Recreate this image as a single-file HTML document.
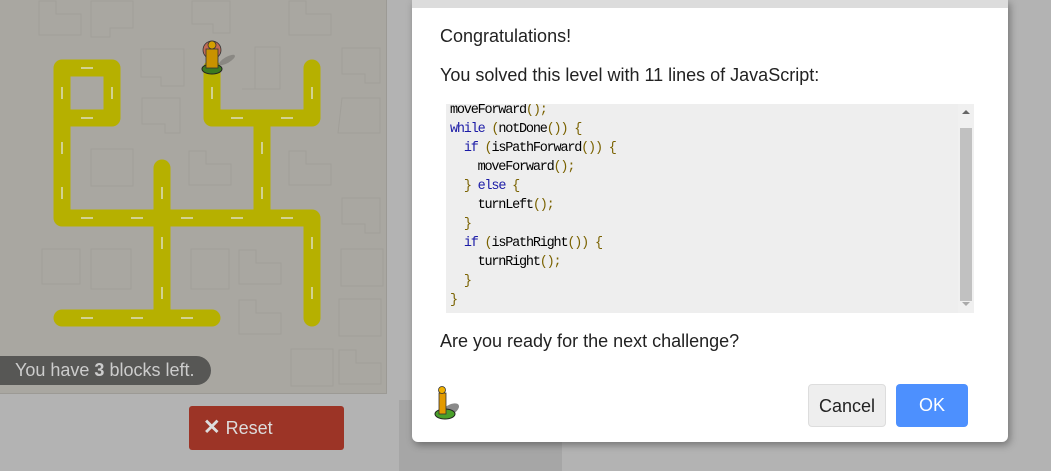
<!DOCTYPE html>
<html><head><style>
body{margin:0;width:1051px;height:471px;overflow:hidden;background:#b3b3b3;font-family:"Liberation Sans",sans-serif;position:relative}
#maze{position:absolute;left:0;top:0;width:386px;height:393px;background:#a9a7a1;border-right:1px solid #9c9a95;border-bottom:1px solid #9c9a95}
#stripe{position:absolute;left:399px;top:400px;width:163px;height:71px;background:#a6a6a6}
#tip{position:absolute;left:0;top:356px;width:211px;height:29px;background:#575755;border-radius:0 15px 15px 0;color:#ccc;font-size:18px;line-height:29px;padding-left:15px;box-sizing:border-box}
#reset{position:absolute;left:189px;top:406px;width:155px;height:44px;background:#9c3426;border-radius:3px;color:#ddd;font-size:18px;line-height:44px;padding-left:14px;box-sizing:border-box}
#dlg{position:absolute;left:412px;top:0;width:596px;height:442px;background:#fff;border-radius:0 0 6px 6px;box-shadow:2px 3px 8px rgba(0,0,0,.35)}
#band{position:absolute;left:0;top:0;width:100%;height:8px;background:#dcdcdc}
.t{position:absolute;left:28px;font-size:18px;color:#222}
#code{position:absolute;left:34px;top:104px;width:528px;height:209px;background:#eee;overflow:hidden}
#code pre{margin:0;position:absolute;left:4px;top:-3px;font-family:"Liberation Mono",monospace;font-size:13.5px;letter-spacing:-1.2px;line-height:19px;color:#000}
.k{color:#1a1aa6}.p{color:#7a6200}
#sb{position:absolute;right:0;top:0;width:16px;height:209px;background:#f0f0f0}
#thumb{position:absolute;right:2px;top:24px;width:12px;height:173px;background:#c1c1c1}
.btn{position:absolute;top:384px;height:43px;border-radius:4px;font-size:18px;line-height:43px;text-align:center;box-sizing:border-box}
</style></head><body>
<div id="maze">
<svg width="386" height="393" style="position:absolute;left:0;top:0">
<g fill="none" stroke="#a19f99" stroke-width="1">
<path d="M39 1h17v13h25v21H39z"/><path d="M91 1h42v27h-23v9H91z"/><path d="M192 1h38v32h-17v-9h-21z"/><path d="M289 1h17v13h25v21h-42z"/>
<path d="M141 49h43v37h-23v-9h-20z"/><path d="M242 89h13v-42h25v42z"/><path d="M342 48h38v35h-15v-9h-23z"/>
<path d="M142 98h38v35h-15v-9h-23z"/><path d="M342 98h38v35h-42z"/>
<path d="M91 149h42v37H91z"/><path d="M189 151h17v13h25v21h-42z"/><path d="M289 151h17v13h25v21h-42z"/>
<path d="M342 198h38v35h-15v-9h-23z"/><path d="M42 249h38v35h-38z"/><path d="M91 249h40v40H91z"/><path d="M191 249h38v40h-38z"/><path d="M239 250h17v13h25v21h-42z"/><path d="M341 249h42v37h-42z"/>
<path d="M339 299h42v37h-42z"/><path d="M239 300h17v13h25v21h-42z"/><path d="M291 349h42v37h-42z"/><path d="M339 350h17v13h25v21h-42z"/>
</g>
<g fill="none" stroke="#b6b000" stroke-width="17" stroke-linecap="round" stroke-linejoin="round">
<path d="M62 68H112V118H62V68"/><path d="M62 118V218H312V318"/><path d="M162 168V318"/><path d="M62 318H212"/>
<path d="M212 68V118H312V68"/><path d="M262 118V218"/>
</g>
<g stroke="#dcdcc0" stroke-width="1.5">
<path d="M81 68h12M81 118h12M81 218h12M131 218h12M181 218h12M231 218h12M281 218h12M81 318h12M131 318h12M181 318h12M231 118h12M281 118h12"/>
<path d="M62 87v12M112 87v12M62 142v12M62 187v12M162 187v12M162 237v12M162 287v12M212 87v12M262 142v12M262 187v12M312 87v12M312 237v12M312 287v12"/>
</g>
<ellipse cx="227" cy="60" rx="9" ry="3" fill="#8a8883" transform="rotate(-30 227 60)"/>
<ellipse cx="212" cy="69" rx="10" ry="5" fill="#3d7a1f" stroke="#222" stroke-width="1"/>
<circle cx="212" cy="50" r="9" fill="#c06a55" stroke="#333" stroke-width=".8"/>
<rect x="206" y="49" width="12" height="19" fill="#c99200" stroke="#333" stroke-width=".8"/>
<circle cx="212" cy="45" r="4" fill="#d4a000" stroke="#333" stroke-width=".8"/>
</svg>
</div>
<div id="stripe"></div>
<div id="tip">You have <b>3</b> blocks left.</div>
<div id="reset"><span style="font-weight:bold;font-size:21px">✕</span> Reset</div>
<div id="dlg">
<div id="band"></div>
<div class="t" style="top:26px">Congratulations!</div>
<div class="t" style="top:65px">You solved this level with 11 lines of JavaScript:</div>
<div id="code"><pre>moveForward<span class="p">();</span>
<span class="k">while</span> <span class="p">(</span>notDone<span class="p">()) {</span>
  <span class="k">if</span> <span class="p">(</span>isPathForward<span class="p">()) {</span>
    moveForward<span class="p">();</span>
  <span class="p">}</span> <span class="k">else</span> <span class="p">{</span>
    turnLeft<span class="p">();</span>
  <span class="p">}</span>
  <span class="k">if</span> <span class="p">(</span>isPathRight<span class="p">()) {</span>
    turnRight<span class="p">();</span>
  <span class="p">}</span>
<span class="p">}</span></pre>
<div id="sb"><div id="thumb"></div><div style="position:absolute;left:4px;top:6px;border:4px solid transparent;border-bottom:4px solid #666;border-top:0"></div><div style="position:absolute;left:4px;top:198px;border:4px solid transparent;border-top:4px solid #aaa;border-bottom:0"></div></div>
</div>
<div class="t" style="top:331px">Are you ready for the next challenge?</div>
<svg width="40" height="40" style="position:absolute;left:20px;top:384px">
<ellipse cx="18" cy="26" rx="10" ry="5" fill="#8a8a8a" transform="rotate(-30 18 26)"/>
<ellipse cx="13" cy="30" rx="10" ry="5" fill="#4aa02a" stroke="#222"/>
<rect x="7" y="9" width="7" height="21" fill="#e39a00" stroke="#333" stroke-width=".8"/>
<circle cx="10" cy="6" r="3.5" fill="#f0b000" stroke="#333" stroke-width=".8"/>
</svg>
<div class="btn" style="left:396px;width:78px;background:#eee;border:1px solid #ddd;color:#222">Cancel</div>
<div class="btn" style="left:484px;width:72px;background:#4d90fe;color:#fff">OK</div>
</div>
</body></html>
